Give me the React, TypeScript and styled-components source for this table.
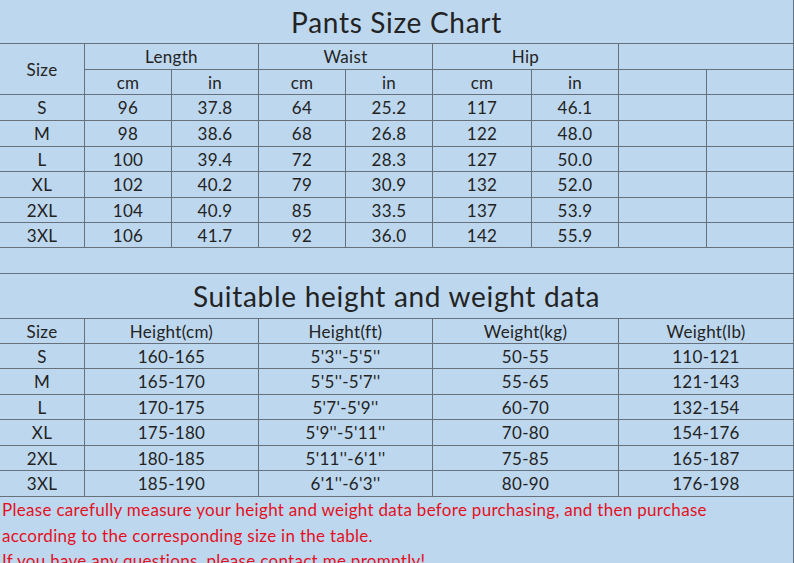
import React from 'react'
import styled, { createGlobalStyle } from 'styled-components'

const GlobalStyle = createGlobalStyle`
  html, body {
    margin: 0;
    padding: 0;
    background: #bdd7ee;
  }
  body {
    font-family: Lato, "DejaVu Sans", sans-serif;
    color: #232323;
  }
`

const LINE = '#66717c'

const Sheet = styled.div`
  width: 794px;
  height: 563px;
  overflow: hidden;
  background: #bdd7ee;
`

const Grid = styled.div<{ $cols: string; $rows: string }>`
  display: grid;
  grid-template-columns: ${(p) => p.$cols};
  grid-template-rows: ${(p) => p.$rows};
  width: 794px;
`

const Cell = styled.div<{ $span?: number; $rowSpan?: number; $title?: boolean }>`
  box-sizing: border-box;
  grid-column: span ${(p) => p.$span ?? 1};
  grid-row: span ${(p) => p.$rowSpan ?? 1};
  border-right: 1px solid ${LINE};
  border-bottom: 1px solid ${LINE};
  display: flex;
  align-items: center;
  justify-content: center;
  font-size: ${(p) => (p.$title ? '28px' : '17px')};
  letter-spacing: ${(p) => (p.$title ? '0.7px' : '0.3px')};
  line-height: 1;
  white-space: nowrap;
`

const Notes = styled.div`
  box-sizing: border-box;
  width: 794px;
  border-right: 1px solid ${LINE};
  padding-left: 2px;
  color: #e3101e;
  font-size: 17px;
  letter-spacing: 0.3px;
  line-height: 25.5px;
`

const pants = [
  ['S', '96', '37.8', '64', '25.2', '117', '46.1'],
  ['M', '98', '38.6', '68', '26.8', '122', '48.0'],
  ['L', '100', '39.4', '72', '28.3', '127', '50.0'],
  ['XL', '102', '40.2', '79', '30.9', '132', '52.0'],
  ['2XL', '104', '40.9', '85', '33.5', '137', '53.9'],
  ['3XL', '106', '41.7', '92', '36.0', '142', '55.9'],
]

const fit = [
  ['S', '160-165', `5'3''-5'5''`, '50-55', '110-121'],
  ['M', '165-170', `5'5''-5'7''`, '55-65', '121-143'],
  ['L', '170-175', `5'7'-5'9''`, '60-70', '132-154'],
  ['XL', '175-180', `5'9''-5'11''`, '70-80', '154-176'],
  ['2XL', '180-185', `5'11''-6'1''`, '75-85', '165-187'],
  ['3XL', '185-190', `6'1''-6'3''`, '80-90', '176-198'],
]

export default function App() {
  return (
    <Sheet>
      <GlobalStyle />
      <Grid
        $cols="85px 87px 87px 87px 87px 99px 87px 88px 87px"
        $rows="44px 26px 25px 26px 26px 25px 26px 25px 25px 26px"
      >
        <Cell $span={9} $title>Pants Size Chart</Cell>
        <Cell $rowSpan={2}>Size</Cell>
        <Cell $span={2}>Length</Cell>
        <Cell $span={2}>Waist</Cell>
        <Cell $span={2}>Hip</Cell>
        <Cell $span={2} />
        {['cm', 'in', 'cm', 'in', 'cm', 'in'].map((u, i) => (
          <Cell key={i}>{u}</Cell>
        ))}
        <Cell />
        <Cell />
        {pants.map((row) => (
          <React.Fragment key={row[0]}>
            {row.map((v, i) => (
              <Cell key={i}>{v}</Cell>
            ))}
            <Cell />
            <Cell />
          </React.Fragment>
        ))}
        <Cell $span={9} />
      </Grid>
      <Grid $cols="85px 174px 174px 186px 175px" $rows="45px 25px 25px 26px 25px 26px 25px 26px">
        <Cell $span={5} $title>Suitable height and weight data</Cell>
        <Cell>Size</Cell>
        <Cell>Height(cm)</Cell>
        <Cell>Height(ft)</Cell>
        <Cell>Weight(kg)</Cell>
        <Cell>Weight(lb)</Cell>
        {fit.map((row) => (
          <React.Fragment key={row[0]}>
            {row.map((v, i) => (
              <Cell key={i}>{v}</Cell>
            ))}
          </React.Fragment>
        ))}
      </Grid>
      <Notes>
        Please carefully measure your height and weight data before purchasing, and then purchase
        <br />
        according to the corresponding size in the table.
        <br />
        If you have any questions, please contact me promptly!
      </Notes>
    </Sheet>
  )
}
